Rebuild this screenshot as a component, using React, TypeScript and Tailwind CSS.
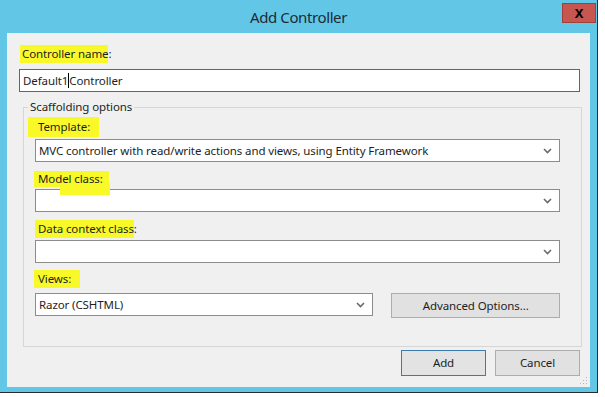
import React from "react";

function Chevron() {
  return (
    <svg width="9" height="6" viewBox="0 0 9 6" className="shrink-0">
      <polyline points="1,1 4.5,4.5 8,1" fill="none" stroke="#6a6a6a" strokeWidth="1.6" />
    </svg>
  );
}

function Select({ text, className = "" }: { text?: string; className?: string }) {
  return (
    <div
      className={
        "h-[23px] bg-white border border-[#8c8c8c] flex items-center justify-between pl-[3px] pr-[7px] " +
        className
      }
    >
      <span className="leading-[16px]">{text}</span>
      <Chevron />
    </div>
  );
}

function Mark({ children, className = "" }: { children: React.ReactNode; className?: string }) {
  return <span className={"inline-block bg-[#f9f92a] " + className}>{children}</span>;
}

export default function App() {
  return (
    <div className="w-[605px] h-[397px] bg-white overflow-hidden font-['Noto_Sans',sans-serif] text-[11.5px] tracking-[-0.1px] text-[#1e1e1e]">
      <div className="w-[598px] h-[393px] bg-[#62c7e7] border-r border-b border-[#2b2b2b] flex flex-col">
        {/* title bar */}
        <div className="h-[33px] relative flex items-center justify-center">
          <span className="text-[15px] tracking-[-0.4px] text-[#1d2b38] pt-[1px]">Add Controller</span>
          <div className="absolute right-[1px] top-[3px] w-[34px] h-[20px] bg-[#c75550] border border-[#a0403c] flex items-center justify-center">
            <span className="text-[13px] font-bold text-black leading-none">X</span>
          </div>
        </div>

        {/* client area */}
        <div className="mx-[7px] h-[354px] bg-[#f0f0f0] relative px-[12px] pt-[12px]">
          <div className="h-[18px] flex items-center">
            <Mark className="ml-[1px] pl-[2px] h-[18px] leading-[18px]">Controller name</Mark>
            <span className="leading-[18px]">:</span>
          </div>
          <div className="mt-[6px] w-[561px] h-[23px] bg-white border border-[#4f6b83] flex items-center pl-[3px]">
            <span>Default1</span>
            <span className="w-[1px] h-[15px] bg-black" />
            <span>Controller</span>
          </div>

          <fieldset className="mt-[7px] ml-[4px] w-[559px] border border-[#d6d6d6] pl-[4px] pb-[28px]">
            <legend className="px-[2px] leading-[16px]">Scaffolding options</legend>
            <div className="pl-[7px] w-[532px]">
              <div className="mt-[2px] h-[20px] flex">
                <Mark className="-ml-[7px] pl-[10px] pr-[9px] h-[20px] leading-[20px]">Template:</Mark>
              </div>
              <Select className="mt-[2px]" text="MVC controller with read/write actions and views, using Entity Framework" />

              <div className="mt-[9px] h-[18px] flex relative">
                <Mark className="-ml-[1px] pl-[4px] pr-[6px] h-[16px] leading-[16px]">Model class:</Mark>
                <span className="absolute left-[25px] top-[12px] w-[50px] h-[12px] bg-[#f9f92a] z-10" />
              </div>
              <Select />

              <div className="mt-[8px] h-[18px] flex">
                <Mark className="pl-[3px] h-[18px] leading-[18px]">Data context class</Mark>
                <span className="leading-[18px]">:</span>
              </div>
              <Select className="mt-[2px]" />

              <div className="mt-[7px] h-[18px] flex">
                <Mark className="-ml-[1px] pl-[4px] pr-[9px] h-[18px] leading-[18px]">Views:</Mark>
              </div>
              <div className="mt-[5px] flex items-start">
                <Select className="w-[339px]" text="Razor (CSHTML)" />
                <div className="ml-[18px] w-[169px] h-[25px] bg-[#e1e1e1] border border-[#adadad] flex items-center justify-center">
                  Advanced Options...
                </div>
              </div>
            </div>
          </fieldset>

          <div className="mt-[3px] w-[561px] flex justify-end">
            <div className="w-[85px] h-[26px] bg-[#e3e3e3] border border-[#3d7bad] flex items-center justify-center">
              Add
            </div>
            <div className="ml-[9px] w-[85px] h-[26px] bg-[#e1e1e1] border border-[#adadad] flex items-center justify-center">
              Cancel
            </div>
          </div>

          <svg className="absolute right-[2px] bottom-[2px]" width="9" height="9" viewBox="0 0 9 9">
            <rect x="7" y="1" width="1" height="1" fill="#b8b8b8" />
            <rect x="4" y="4" width="1" height="1" fill="#b8b8b8" />
            <rect x="7" y="4" width="1" height="1" fill="#b8b8b8" />
            <rect x="1" y="7" width="1" height="1" fill="#b8b8b8" />
            <rect x="4" y="7" width="1" height="1" fill="#b8b8b8" />
            <rect x="7" y="7" width="1" height="1" fill="#b8b8b8" />
          </svg>
        </div>
      </div>
    </div>
  );
}
